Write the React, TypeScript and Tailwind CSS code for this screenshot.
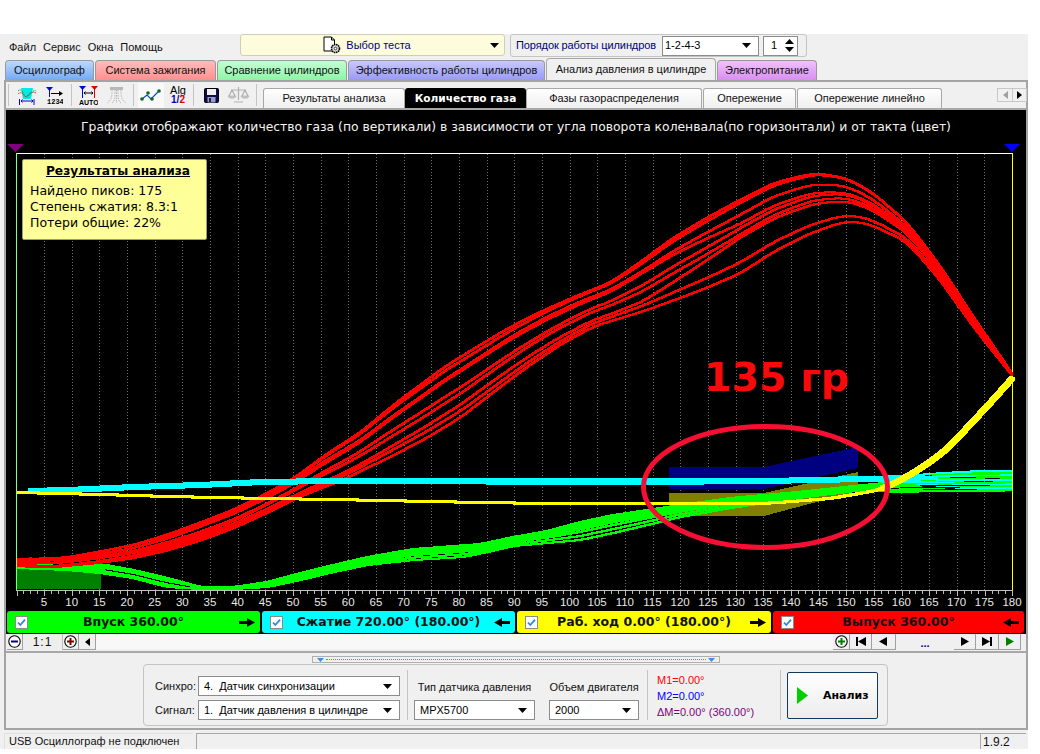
import React from "react";

type P = [number, number];
const interp = (k: P[], x: number) => {
  if (x <= k[0][0]) return k[0][1];
  for (let i = 1; i < k.length; i++) {
    if (x <= k[i][0]) {
      const t = (x - k[i - 1][0]) / (k[i][0] - k[i - 1][0]);
      return k[i - 1][1] + (k[i][1] - k[i - 1][1]) * t;
    }
  }
  return k[k.length - 1][1];
};
const smooth = (k: P[], x: number, r0 = 10) => {
  const r = Math.max(0, Math.min(r0, 1012 - x));
  let s = 0;
  let n = 0;
  for (let d = -r; d <= r; d += 1) {
    s += interp(k, x + d);
    n++;
  }
  return s / n;
};
const stair = (f: (x: number) => number, a: number, b: number) => {
  let d = `M${a} ${Math.round(f(a))}`;
  for (let x = a + 1; x <= b; x++) d += `H${x}V${Math.round(f(x))}`;
  return d;
};

const redTop: P[] = [[17,559],[67,557],[100,551],[133,545],[167,535],[200,523],[233,510],[267,493],[293,478],[327,453],[360,432],[393,405],[427,380],[443,368],[477,347],[510,327],[543,310],[577,295],[610,282],[640,262],[673,238],[707,218],[740,200],[773,183],[807,174],[820,173],[847,178],[873,193],[907,223],[940,267],[973,317],[1012,374]];
const redBot: P[] = [[17,566],[50,568],[100,563],[133,558],[167,550],[200,540],[233,528],[267,513],[300,497],[343,480],[393,455],[427,437],[460,417],[493,392],[527,367],[560,345],[593,327],[640,312],[673,300],[707,287],[740,273],[773,252],[807,235],[840,223],[857,222],[873,226],[907,242],[940,280],[973,327],[1012,376]];
const greenTop: P[] = [[17,562],[67,567],[100,564],[133,570],[167,578],[200,587],[217,587],[233,587],[267,582],[300,573],[333,565],[367,557],[413,549],[480,544],[513,537],[547,531],[580,522],[613,515],[647,510],[680,505],[730,498],[797,492],[863,485],[893,482],[943,475],[973,473],[1012,473]];
const greenBot: P[] = [[17,568],[67,570],[100,573],[133,578],[167,587],[200,589],[233,589],[267,587],[300,580],[333,572],[367,565],[413,560],[463,557],[487,552],[513,546],[547,543],[580,540],[613,533],[647,525],[680,517],[730,508],[797,498],[863,490],[893,492],[943,491],[1012,490]];
const cyanTop: P[] = [[28,489],[67,488],[133,485],[200,483],[260,480],[333,479],[640,479],[765,479],[863,477],[903,476],[943,473],[980,471],[1012,471]];
const cyanBot: P[] = [[28,493],[67,492],[133,489],[200,487],[260,484],[333,483],[640,484],[765,483],[863,481],[903,482],[960,488],[1012,488]];
const yellow: P[] = [[17,492],[100,494],[167,496],[267,498],[333,499],[380,500],[480,502],[547,503],[647,503],[763,503],[830,498],[880,489],[903,478],[927,463],[947,448],[970,423],[987,405],[1012,377]];

const redL = [0, 0.06, 0.2, 0.24, 0.5, 0.6, 0.8, 0.9, 1];
const redR = [0, 0.03, 0.2, 0.33, 0.38, 0.47, 0.52, 0.85, 1];
const redFrac = (i: number, x: number) => {
  const m = Math.min(1, Math.max(0, (x - 640) / 100));
  return redL[i] * (1 - m) + redR[i] * m;
};
const greenF = [0, 0.1, 0.2, 0.3, 0.4, 0.55, 0.78, 1];
const cyanF = [0, 0.25, 0.5, 0.75, 1];

const gridX = Array.from({ length: 36 }, (_, i) => Math.round(44 + i * 5.532 * 5));
const minorX = Array.from({ length: 145 }, (_, i) => Math.round(16.5 + i * 6.915));

function Chart() {
  return (
    <svg width={1020} height={452} viewBox="6 144 1020 452" className="block">
      {gridX.map((x) => (
        <line key={x} x1={x + 0.5} x2={x + 0.5} y1={154} y2={590} stroke="#707070" strokeDasharray="1 2" />
      ))}
      {minorX.map((x, i) => (
        <line key={i} x1={x + 0.5} x2={x + 0.5} y1={591} y2={i % 4 === 0 ? 596 : 594} stroke="#bbbbbb" />
      ))}
      <rect x={16} y={153} width={997} height={1} fill="#ffffff" />
      <rect x={16} y={153} width={1} height={438} fill="#80ff80" />
      <rect x={1012} y={153} width={1} height={438} fill="#ffff00" />
      <rect x={16} y={590} width={997} height={1} fill="#c0c0c0" />
      <polygon points="7,144 24,144 15.5,152" fill="#800080" />
      <polygon points="1004,144 1020,144 1012,152" fill="#0000ff" />

      <g shapeRendering="crispEdges">
        <rect x={17} y={569} width={84} height={20} fill="#008000" />
        <polygon points="669,467 764,467 858,447 858,468 764,489 669,489" fill="#000080" />
        <polygon points="669,493 764,493 858,472 858,491 764,516 669,516" fill="#808000" />
        {greenF.map((t, i) => (
          <path
            key={i}
            d={stair((x) => smooth(greenTop, x, 6) * (1 - t) + smooth(greenBot, x, 6) * t, 17, 1012)}
            fill="none"
            stroke="#00ff00"
            strokeWidth={2}
          />
        ))}
        <path d={stair((x) => smooth(greenTop, x, 6) * 0.5 + smooth(greenBot, x, 6) * 0.5, 105, 190)} fill="none" stroke="#000000" strokeWidth={1} />
        {redL.map((_, i) => (
          <path
            key={i}
            d={stair(
              (x) =>
                smooth(redTop, x) * (1 - redFrac(i, x)) +
                smooth(redBot, x) * redFrac(i, x) +
                (x > 30 && x < 960 ? Math.sin(x / 41 + i * 2) * 0.5 : 0),
              17,
              1012,
            )}
            fill="none"
            stroke="#ff0000"
            strokeWidth={2}
          />
        ))}
        {cyanF.map((t, i) => (
          <path
            key={i}
            d={stair((x) => smooth(cyanTop, x, 4) * (1 - t) + smooth(cyanBot, x, 4) * t, 28, 1012)}
            fill="none"
            stroke="#00ffff"
            strokeWidth={2}
          />
        ))}
        <rect x={930} y={474} width={70} height={1} fill="#00ff00" />
        <rect x={950} y={477} width={26} height={1} fill="#000000" />
        <rect x={900} y={483} width={105} height={1} fill="#00ff00" />
        <rect x={920} y={485} width={50} height={1} fill="#000000" />
        <rect x={985} y={478} width={15} height={1} fill="#000000" />
        <rect x={900} y={490} width={105} height={2} fill="#00ff00" />
        <rect x={900} y={487} width={60} height={1} fill="#000000" />
        <path d={stair((x) => smooth(yellow, x, 12), 17, 880)} fill="none" stroke="#ffff00" strokeWidth={3} />
        <path d={stair((x) => smooth(yellow, x, 12), 880, 1012)} fill="none" stroke="#ffff00" strokeWidth={5} />
      </g>
      <ellipse cx={765.5} cy={487} rx={122} ry={60.5} fill="none" stroke="#f60f32" strokeWidth={5} />
    </svg>
  );
}

const Caret = ({ dark = true }: { dark?: boolean }) => (
  <svg width={9} height={5} viewBox="0 0 9 5" className="shrink-0">
    <polygon points="0,0 9,0 4.5,5" fill={dark ? "#000" : "#888"} />
  </svg>
);

function Select({ w, text, pl = "pl-[5px]" }: { w: string; text: string; pl?: string }) {
  return (
    <div className={`${w} h-[20px] bg-white border border-[#8c8c8c] flex items-center justify-between ${pl} pr-[7px] text-black`}>
      <span className="whitespace-pre">{text}</span>
      <Caret />
    </div>
  );
}

function Tab({ text, w, cls }: { text: string; w: string; cls: string }) {
  return (
    <div className={`${w} h-[20px] rounded-t-[4px] border border-b-0 border-[#9a9a9a] flex items-center justify-center text-[#111] whitespace-nowrap ${cls}`}>
      {text}
    </div>
  );
}

function SubTab({ text, w, cls = "" }: { text: string; w: string; cls?: string }) {
  return (
    <div className={`${w} h-[20px] rounded-t-[3px] border border-b-0 border-[#a8a8a8] flex items-center justify-center whitespace-nowrap bg-gradient-to-b from-white to-[#efefef] text-[#111] ${cls}`}>
      {text}
    </div>
  );
}

const Divider = ({ cls = "" }: { cls?: string }) => <div className={`w-px bg-[#c4c4c4] ${cls}`} />;

const Check = () => (
  <svg width={13} height={13} viewBox="0 0 13 13" className="shrink-0">
    <rect x={0.5} y={0.5} width={12} height={12} fill="#fff" stroke="#8a8a8a" />
    <path d="M3 6.5 L5.3 9 L10 3.6" fill="none" stroke="#2f86e8" strokeWidth={1.8} />
  </svg>
);

const ArrowR = () => (
  <svg width={16} height={9} viewBox="0 0 16 9" className="shrink-0">
    <rect x={0} y={3} width={9} height={3} fill="#000" />
    <polygon points="8,0 16,4.5 8,9" fill="#000" />
  </svg>
);
const ArrowL = () => (
  <svg width={16} height={9} viewBox="0 0 16 9" className="shrink-0">
    <rect x={7} y={3} width={9} height={3} fill="#000" />
    <polygon points="8,0 0,4.5 8,9" fill="#000" />
  </svg>
);

function Stroke({ w, cls, text, right }: { w: string; cls: string; text: string; right: boolean }) {
  return (
    <div className={`${w} h-[22px] rounded-[3px] flex items-center pl-[8px] pr-[5px] ${cls}`}>
      <Check />
      <span className="flex-1 text-center font-['DejaVu_Sans',sans-serif] font-bold text-[12.5px] text-[#111] whitespace-nowrap">{text}</span>
      {right ? <ArrowR /> : <ArrowL />}
    </div>
  );
}

const Circle = ({ sym, color }: { sym: "plus" | "minus"; color: string }) => (
  <svg width={13} height={13} viewBox="0 0 13 13">
    <circle cx={6.5} cy={6.5} r={5.7} fill="#fff" stroke="#000" strokeWidth={1.1} />
    <rect x={3} y={5.5} width={7} height={2} fill={color} />
    {sym === "plus" && <rect x={5.5} y={3} width={2} height={7} fill={color} />}
  </svg>
);

function NavBtn({ w, children }: { w: string; children?: React.ReactNode }) {
  return (
    <div className={`${w} h-[16px] flex items-center justify-center bg-[#f0f0f0] border-r border-b border-[#a0a0a0]`}>{children}</div>
  );
}

const Nav = ({ d, fill = "#000" }: { d: string; fill?: string }) => (
  <svg width={11} height={9} viewBox="0 0 11 9">
    <path d={d} fill={fill} />
  </svg>
);

const IconWave = () => (
  <svg width={20} height={20} viewBox="0 0 20 20">
    <polygon points="4,3 16,3 14,14 6,14" fill="#00e8e8" />
    <path d="M1 6 Q4 3 6 8 T10 11 T15 7 T19 6" fill="none" stroke="#00a000" strokeDasharray="1.5 1" />
    <path d="M1 9 Q4 6 7 10 T12 10 T19 8" fill="none" stroke="#e02020" strokeDasharray="1.5 1" />
    <path d="M4 16 H16 M5.5 14.5 L4 16 L5.5 17.5 M14.5 14.5 L16 16 L14.5 17.5" fill="none" stroke="#0000e0" />
    <rect x={2} y={14} width={1} height={6} fill="#0000e0" />
    <rect x={16.5} y={14} width={1} height={6} fill="#0000e0" />
  </svg>
);
const Icon1234 = () => (
  <svg width={17} height={17} viewBox="0 0 17 17">
    <polygon points="0,0 7,0 3.5,4" fill="#0000e0" />
    <rect x={3} y={3} width={1} height={7} fill="#0000e0" />
    <path d="M5 6.5 H14" stroke="#000" />
    <polygon points="13,4 17,6.5 13,9" fill="#000" />
    <text x={1} y={16.5} fontSize={7} fontWeight={700} fontFamily="'Liberation Mono',monospace" fill="#000">1234</text>
  </svg>
);
const IconAuto = () => (
  <svg width={19} height={19} viewBox="0 0 19 19">
    <polygon points="0,0 7,0 3.5,4" fill="#0000e0" />
    <rect x={3} y={3} width={1} height={9} fill="#0000e0" />
    <polygon points="12,0 19,0 15.5,4" fill="#e00000" />
    <rect x={15} y={3} width={1} height={9} fill="#e00000" />
    <path d="M5 7 H14 M6.5 5.5 L5 7 L6.5 8.5 M12.5 5.5 L14 7 L12.5 8.5" fill="none" stroke="#000" />
    <text x={0} y={18.5} fontSize={7} fontWeight={700} fontFamily="'Liberation Sans',sans-serif" fill="#000">AUTO</text>
  </svg>
);
const IconFan = () => (
  <svg width={19} height={17} viewBox="0 0 19 17">
    <rect x={3} y={0} width={13} height={3} fill="#b8b8b8" />
    <path d="M5 3 V6 C5 11 3 14 0 16 M8 3 V8 C8 12 7 15 5 16 M11 3 V8 C11 12 12 15 14 16 M14 3 V6 C14 11 16 14 19 16 M9.5 3 V16" fill="none" stroke="#b8b8b8" strokeDasharray="1.5 1" />
  </svg>
);
const IconZig = () => (
  <svg width={21} height={12} viewBox="0 0 21 12">
    <path d="M2 10 L7 6 L11 10 L19 2" fill="none" stroke="#0a4fc0" strokeWidth={1.2} />
    <circle cx={2} cy={10} r={1.8} fill="#0a6a20" />
    <circle cx={8} cy={4} r={1.8} fill="#0a6a20" />
    <circle cx={12} cy={10} r={1.8} fill="#0a6a20" />
    <circle cx={19} cy={2} r={1.8} fill="#0a6a20" />
  </svg>
);
const IconAlg = () => (
  <div className="w-[17px] flex flex-col items-center text-[11px] leading-[10px] text-black">
    <span>Alg</span>
    <span className="font-bold text-[10px] leading-[10px]">
      <span className="text-[#0000c0]">1/</span>
      <span className="text-[#e00000]">2</span>
    </span>
  </div>
);
const IconSave = () => (
  <svg width={15} height={15} viewBox="0 0 15 15">
    <rect x={0.5} y={0.5} width={14} height={14} rx={1} fill="#0c0c4a" stroke="#000" />
    <rect x={3} y={1} width={9} height={6} fill="#f0f0f0" />
    <rect x={3.5} y={9} width={8} height={5.5} fill="#9a9ad0" />
    <rect x={5} y={10} width={2} height={4} fill="#222" />
  </svg>
);
const IconScale = () => (
  <svg width={21} height={16} viewBox="0 0 21 16">
    <path d="M10.5 0 V13 M6 15 H15 M3 3 H18 M4 3 L1 9 M4 3 L7 9 M17 3 L14 9 M17 3 L20 9" fill="none" stroke="#b0b0b0" strokeWidth={1.2} />
    <path d="M0 9 H8 C8 12 0 12 0 9 Z M13 9 H21 C21 12 13 12 13 9 Z" fill="#c8c8c8" stroke="#aaaaaa" strokeWidth={0.6} />
  </svg>
);

export default function App() {
  const axis = Array.from({ length: 36 }, (_, i) => (i + 1) * 5);
  return (
    <div className="w-[1040px] h-[754px] bg-white pt-[34px] overflow-hidden font-['Liberation_Sans',Arial,sans-serif] text-[11px] leading-none">
      <div className="w-[1028px] bg-[#f0f0f0]">
        {/* top bar */}
        <div className="h-[24px] flex items-start text-[#111]">
          <div className="w-[240px] h-[24px] flex items-end pb-[5px] pl-[9px] gap-[7px]">
            <span>Файл</span>
            <span>Сервис</span>
            <span>Окна</span>
            <span>Помощь</span>
          </div>
          <div className="w-[265px] h-[22px] bg-[#fdfcdc] border border-[#cfcfb8] rounded-[3px] flex items-center pr-[5px]">
            <div className="flex-1 flex items-center justify-center gap-[3px] text-[#000080] pl-[2px]">
              <svg width={21} height={18} viewBox="0 0 20 18">
                <path d="M1.5 1 H9 L12 4 V15 H1.5 Z M9 1 V4 H12" fill="#fff" stroke="#000" />
                <circle cx={13} cy={12.5} r={4} fill="#ddd" stroke="#000" strokeDasharray="1.5 0.6" strokeWidth={1.6} />
                <circle cx={13} cy={12.5} r={1.3} fill="#fff" stroke="#000" strokeWidth={0.7} />
              </svg>
              <span>Выбор теста</span>
            </div>
            <Caret />
          </div>
          <div className="ml-[5px] w-[297px] h-[23px] border border-[#c4c4c4] rounded-[3px] flex items-center pl-[5px] text-[#000080]">
            <span className="w-[146px] whitespace-nowrap tracking-[-0.1px]">Порядок работы цилиндров</span>
            <Select w="w-[97px]" text="1-2-4-3" pl="pl-[2px]" />
            <div className="ml-[4px] w-[35px] h-[20px] bg-white border border-[#8c8c8c] flex items-center justify-between pl-[7px] pr-[3px] text-black">
              <span>1</span>
              <svg width={9} height={13} viewBox="0 0 9 13">
                <polygon points="4.5,0 9,5 0,5" fill="#000" />
                <polygon points="4.5,13 9,8 0,8" fill="#000" />
              </svg>
            </div>
          </div>
        </div>

        {/* main tabs */}
        <div className="h-[22px] pl-[5px] flex items-end gap-[1px]">
          <Tab text="Осциллограф" w="w-[89px]" cls="bg-gradient-to-b from-[#bcd9ff] to-[#74aaf2]" />
          <Tab text="Система зажигания" w="w-[121px]" cls="bg-gradient-to-b from-[#ffbcbc] to-[#ff8f8f]" />
          <Tab text="Сравнение цилиндров" w="w-[130px]" cls="bg-gradient-to-b from-[#c2ffd4] to-[#8cf5a6]" />
          <Tab text="Эффективность работы цилиндров" w="w-[197px]" cls="bg-gradient-to-b from-[#c8c8ff] to-[#9a9af5]" />
          <div className="w-[170px] h-[22px] rounded-t-[4px] border border-b-0 border-[#a8a8a8] bg-[#f0f0f0] flex items-center justify-center text-[#111] whitespace-nowrap">
            Анализ давления в цилиндре
          </div>
          <Tab text="Электропитание" w="w-[100px]" cls="bg-gradient-to-b from-[#f2c0ff] to-[#d88ff0]" />
        </div>

        {/* panel */}
        <div className="ml-[4px] w-[1024px] h-[650px] border-x-2 border-y-2 border-[#a4a4a4] box-border flex flex-col">
          {/* toolbar */}
          <div className="h-[26px] flex items-end text-[#111] shrink-0">
            <div className="w-[251px] h-[26px] flex items-center pl-[2px]">
              <Divider cls="h-[22px]" />
              <div className="w-[62px] flex items-center pl-[8px] gap-[9px]"><IconWave /><Icon1234 /></div>
              <Divider cls="h-[22px]" />
              <div className="w-[61px] flex items-center pl-[7px] gap-[9px]"><IconAuto /><IconFan /></div>
              <Divider cls="h-[22px]" />
              <div className="w-[60px] flex items-center pl-[4px] gap-[6px]">
                <div className="w-[26px] h-[25px] bg-[#f9f9f9] flex items-center justify-center"><IconZig /></div>
                <IconAlg />
              </div>
              <Divider cls="h-[22px]" />
              <div className="w-[62px] flex items-center pl-[10px] gap-[9px]"><IconSave /><IconScale /></div>
              <Divider cls="h-[22px]" />
            </div>
            <div className="ml-[6px] flex items-end">
              <SubTab text="Результаты анализа" w="w-[142px]" />
              <div className="w-[121px] h-[20px] rounded-t-[3px] bg-black text-white font-['DejaVu_Sans',sans-serif] font-bold text-[10.6px] flex items-center justify-center whitespace-nowrap">
                Количество газа
              </div>
              <SubTab text="Фазы газораспределения" w="w-[176px]" />
              <SubTab text="Опережение" w="w-[93px]" cls="ml-[1px]" />
              <SubTab text="Опережение линейно" w="w-[145px]" cls="ml-[1px]" />
            </div>
            <div className="ml-[55px] mb-[6px] w-[30px] h-[14px] border border-[#c8c8c8] flex items-center">
              <div className="w-[15px] flex justify-center"><svg width={5} height={8} viewBox="0 0 5 8"><polygon points="5,0 0,4 5,8" fill="#a0a0a0" /></svg></div>
              <div className="w-[14px] h-full flex justify-center items-center border-l border-[#c8c8c8]"><svg width={5} height={8} viewBox="0 0 5 8"><polygon points="0,0 5,4 0,8" fill="#000" /></svg></div>
            </div>
          </div>
          <div className="h-[2px] bg-[#a8a8a8] shrink-0" />

          {/* black scope area */}
          <div className="h-[524px] bg-black shrink-0 relative">
            <div className="h-[34px] flex items-center justify-center text-[#f4f4f4] font-['DejaVu_Sans',sans-serif] text-[12.35px]">
              Графики отображают количество газа (по вертикали) в зависимости от угла поворота коленвала(по горизонтали) и от такта (цвет)
            </div>
            <Chart />
            <div className="h-[15px] flex pl-[24.2px] items-start text-[#e8e8e8] text-[11.5px]">
              {axis.map((a) => (
                <span key={a} className="w-[27.66px] text-center shrink-0 pt-[1px]">{a}</span>
              ))}
            </div>
            <div className="h-[22px] flex pl-[1px] gap-[2px]">
              <Stroke w="w-[253px]" cls="bg-[#00ff00]" text="Впуск 360.00°" right />
              <Stroke w="w-[253px]" cls="bg-[#00ffff]" text="Сжатие 720.00° (180.00°)" right={false} />
              <Stroke w="w-[254px]" cls="bg-[#ffff00]" text="Раб. ход 0.00° (180.00°)" right />
              <Stroke w="w-[251px]" cls="bg-[#ff0000]" text="Выпуск 360.00°" right={false} />
            </div>

            <div className="absolute left-[16px] top-[49px] w-[185px] h-[81px] bg-[#ffff99] border border-[#9a9a80] rounded-[2px] text-black font-['DejaVu_Sans',sans-serif] text-[12.5px] leading-[16px] pl-[7px] pt-[3px]">
              <div className="font-bold underline text-center mb-[4px] text-[12.2px]">Результаты анализа</div>
              <div>Найдено пиков: 175</div>
              <div>Степень сжатия: 8.3:1</div>
              <div>Потери общие: 22%</div>
            </div>
            <div className="absolute left-[698px] top-[242px] font-['DejaVu_Sans',sans-serif] font-bold text-[39.5px] leading-[50px] text-[#f80a0a] whitespace-nowrap">
              135 гр
            </div>
          </div>

          {/* zoom / nav row */}
          <div className="h-[17px] flex items-start shrink-0 border-b-2 border-[#a8a8a8] box-content">
            <div className="w-[1px]" />
            <NavBtn w="w-[16px]"><Circle sym="minus" color="#000080" /></NavBtn>
            <div className="w-[40px] h-[16px] bg-[#eeeeee] border-r border-[#c0c0c0] flex items-center justify-center text-[12px] tracking-[1px] text-[#111]">1:1</div>
            <NavBtn w="w-[16px]"><Circle sym="plus" color="#800000" /></NavBtn>
            <NavBtn w="w-[17px]"><svg width={5} height={8} viewBox="0 0 5 8"><polygon points="5,0 0,4 5,8" fill="#000" /></svg></NavBtn>
            <div className="w-[737px] h-[15px] bg-[#f8f8f8]" />
            <NavBtn w="w-[17px]"><Circle sym="plus" color="#008000" /></NavBtn>
            <NavBtn w="w-[22px]"><Nav d="M1 0 H3 V9 H1 Z M11 0 V9 L3 4.5 Z" /></NavBtn>
            <NavBtn w="w-[24px]"><Nav d="M9 0 V9 L1 4.5 Z" /></NavBtn>
            <div className="w-[58px] h-[16px] bg-[#f0f0f0] flex items-center justify-center text-[#000080] font-bold text-[11px] pt-[2px]">...</div>
            <NavBtn w="w-[22px]"><Nav d="M2 0 V9 L10 4.5 Z" /></NavBtn>
            <NavBtn w="w-[23px]"><Nav d="M0 0 V9 L8 4.5 Z M8 0 H10 V9 H8 Z" /></NavBtn>
            <NavBtn w="w-[22px]"><Nav d="M2 0 V9 L10 4.5 Z" fill="#008000" /></NavBtn>
          </div>

          {/* splitter */}
          <div className="ml-[306px] mt-[3px] w-[408px] h-[7px] border border-[#b0b0b0] flex items-center justify-between px-[4px] shrink-0">
            <svg width={7} height={4} viewBox="0 0 7 4"><polygon points="0,0 7,0 3.5,4" fill="#3c8ee8" /></svg>
            <div className="flex-1 mx-[2px] border-t border-dotted border-[#3c8ee8]" />
            <svg width={7} height={4} viewBox="0 0 7 4"><polygon points="0,0 7,0 3.5,4" fill="#3c8ee8" /></svg>
          </div>

          {/* analysis group */}
          <div className="ml-[137px] mt-[1px] w-[745px] h-[62px] border border-[#c4c4c4] rounded-[4px] flex items-center text-[#111] shrink-0">
            <div className="w-[263px] self-start mt-[11px] flex flex-col gap-[4px] pl-[11px]">
              <div className="flex items-center">
                <span className="w-[43px]">Синхро:</span>
                <Select w="w-[202px]" text="4.  Датчик синхронизации" />
              </div>
              <div className="flex items-center">
                <span className="w-[43px]">Сигнал:</span>
                <Select w="w-[202px]" text="1.  Датчик давления в цилиндре" />
              </div>
            </div>
            <Divider cls="h-[50px]" />
            <div className="w-[239px] self-start mt-[17px] flex gap-[14px] pl-[6px]">
              <div className="w-[121px] flex flex-col gap-[7px]">
                <span className="text-center whitespace-nowrap">Тип датчика давления</span>
                <Select w="w-[121px]" text="MPX5700" />
              </div>
              <div className="w-[90px] flex flex-col gap-[7px]">
                <span className="text-center whitespace-nowrap">Объем двигателя</span>
                <Select w="w-[90px]" text="2000" />
              </div>
            </div>
            <Divider cls="h-[50px]" />
            <div className="w-[132px] flex flex-col gap-[5px] pl-[9px] pt-[2px] text-[11px] leading-[11px]">
              <span className="text-[#ff0000]">M1=0.00°</span>
              <span className="text-[#0000ff]">M2=0.00°</span>
              <span className="text-[#800080] whitespace-nowrap">ΔM=0.00° (360.00°)</span>
            </div>
            <Divider cls="h-[50px]" />
            <div className="ml-[6px] w-[91px] h-[47px] border border-[#103a60] rounded-[2px] bg-gradient-to-b from-[#ffffff] to-[#ececec] flex items-center pl-[9px]">
              <svg width={11} height={17} viewBox="0 0 11 17"><polygon points="0,0 11,8.5 0,17" fill="#00d000" /></svg>
              <span className="ml-[15px] font-['DejaVu_Sans',sans-serif] font-bold text-[11px] text-black">Анализ</span>
            </div>
          </div>
        </div>

        {/* status bar */}
        <div className="h-[19px] bg-white">
          <div className="h-[3px] bg-[#f0f0f0]" />
          <div className="h-[16px] bg-[#f0f0f0] flex text-[#111] text-[11px]">
            <div className="ml-[4px] w-[189px] h-full flex items-center pl-[4px] border-l border-t border-[#e0e0e0] whitespace-nowrap">USB Осциллограф не подключен</div>
            <div className="ml-[3px] w-[784px] h-full border-l border-t border-[#a8a8a8]" />
            <div className="w-[46px] h-full flex items-center pl-[2px] border-l border-t border-[#a8a8a8] text-[12px]">1.9.2</div>
          </div>
        </div>
      </div>
    </div>
  );
}
